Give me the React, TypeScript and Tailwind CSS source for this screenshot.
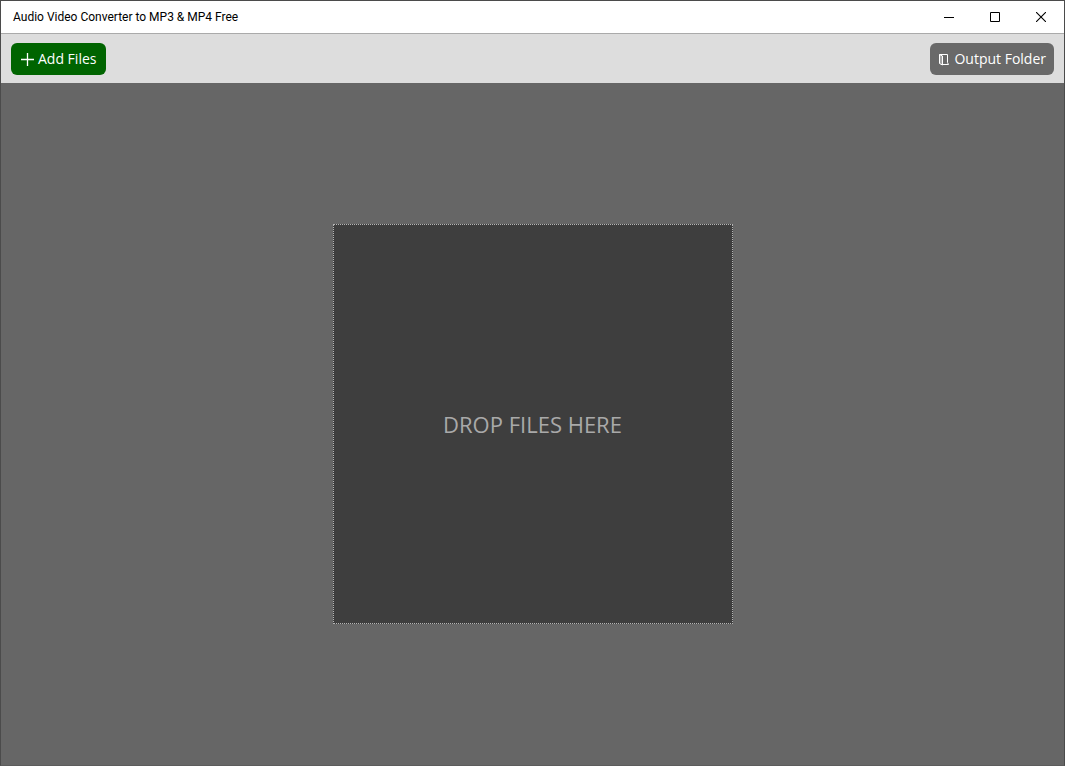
import React from "react";

function PlusIcon() {
  return (
    <svg width="13" height="13" viewBox="0 0 13 13" fill="none" stroke="currentColor" aria-hidden="true">
      <path d="M6.5 0V13M0 6.5H13" strokeWidth="1.3" />
    </svg>
  );
}

function FolderIcon() {
  return (
    <svg width="12" height="13" viewBox="0 0 12 13" fill="none" stroke="currentColor" strokeWidth="1" aria-hidden="true">
      <path d="M1.5 1.5H9.5V9.5L10.5 11.5H5" />
      <path d="M1.5 1.5L4.5 3V12L1.5 10.5Z" fill="currentColor" fillOpacity="0.4" />
    </svg>
  );
}

const captionButton = "flex w-[46px] items-center justify-center hover:bg-gray-200";

function TitleBar() {
  return (
    <header className="flex h-8 items-stretch justify-between bg-white pl-3 text-black">
      <h1 className="self-center font-['Roboto','Open_Sans',sans-serif] text-xs">
        Audio Video Converter to MP3 &amp; MP4 Free
      </h1>
      <div className="flex">
        <button type="button" aria-label="Minimize" className={captionButton}>
          <svg width="10" height="10" viewBox="0 0 10 10" stroke="currentColor" fill="none">
            <path d="M0 5.5H10" />
          </svg>
        </button>
        <button type="button" aria-label="Maximize" className={captionButton}>
          <svg width="10" height="10" viewBox="0 0 10 10" stroke="currentColor" fill="none">
            <path d="M0.5 0.5H9.5V9.5H0.5Z" />
          </svg>
        </button>
        <button type="button" aria-label="Close" className={captionButton}>
          <svg width="10" height="10" viewBox="0 0 10 10" stroke="currentColor" fill="none">
            <path d="M0 0L10 10M10 0L0 10" strokeWidth="1.1" />
          </svg>
        </button>
      </div>
    </header>
  );
}

function DropZone() {
  return (
    <section
      aria-label="Drop area"
      className="flex aspect-square w-full max-w-[400px] items-center justify-center border border-dotted border-[#b4b4b4] bg-[#3e3e3e]"
    >
      <p className="text-[22px] text-[#a9a9a9]">DROP FILES HERE</p>
    </section>
  );
}

export default function App() {
  return (
    <div className="flex min-h-screen flex-col border border-[#4b4b4b] border-b-[#5c5c5c] bg-[#666666] font-['Open_Sans','Noto_Sans',sans-serif]">
      <TitleBar />
      <div className="flex items-center justify-between border-t border-[#aaaaaa] bg-[#dddddd] px-[10px] pt-[9px] pb-2">
        <button
          type="button"
          className="flex h-8 items-center gap-1 rounded-md bg-[#006400] px-[10px] text-sm text-white"
        >
          <PlusIcon />
          Add Files
        </button>
        <button
          type="button"
          className="flex h-8 items-center gap-1 rounded-md bg-[#696969] px-2 text-sm text-white"
        >
          <FolderIcon />
          Output Folder
        </button>
      </div>
      <main className="flex flex-1 items-center justify-center">
        <DropZone />
      </main>
    </div>
  );
}
